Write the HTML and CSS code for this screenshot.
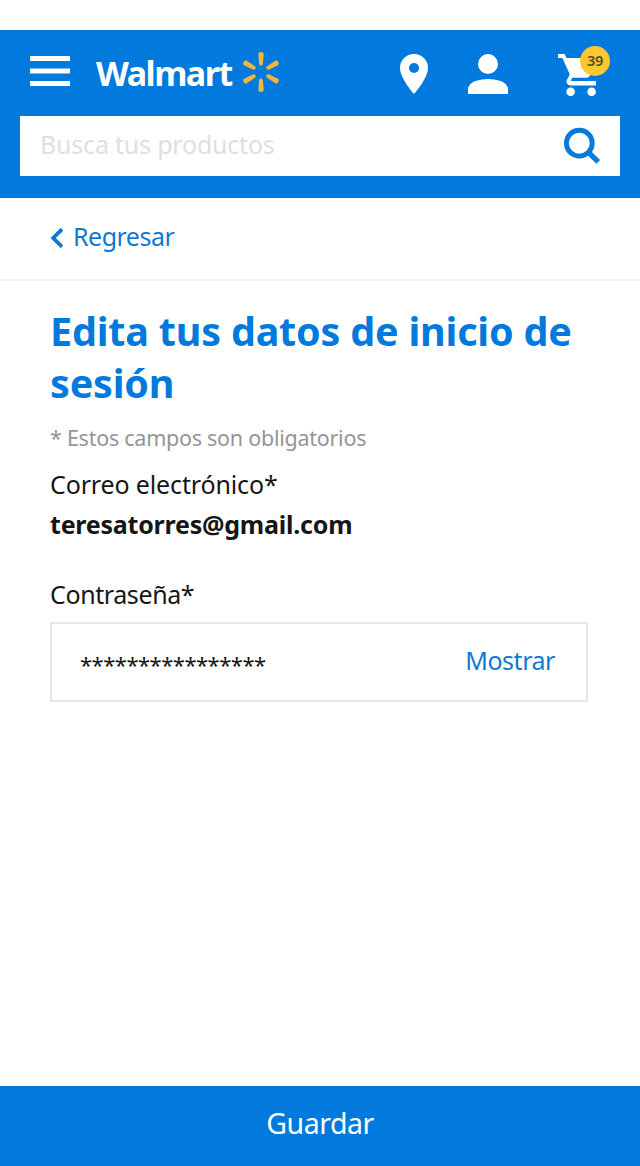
FILE: index.html
```html
<!DOCTYPE html>
<html lang="es">
<head>
<meta charset="utf-8">
<title>Edita tus datos de inicio de sesión</title>
<link rel="stylesheet" href="styles.css">
</head>
<body>
<div class="page">
  <header class="header">
    <div class="topbar">
      <button class="icon-btn menu" aria-label="Menú">
        <svg width="40" height="30" viewBox="0 0 40 30" fill="#fff"><path d="M0 0h40v5H0zM0 12.5h40v5H0zM0 25h40v5H0z"/></svg>
      </button>
      <div class="brand">
        <span class="brand-name">Walmart</span>
        <svg class="spark" width="40" height="40" viewBox="-18 -20 40 40" fill="#efb73e">
          <path id="ray" d="M-2.700-18Q-2.700-20 0-20T2.700-18L1.900-8Q1.700-6.400 0-6.400T-1.900-8z"/>
          <use href="#ray" transform="rotate(60)"/>
          <use href="#ray" transform="rotate(120)"/>
          <use href="#ray" transform="rotate(180)"/>
          <use href="#ray" transform="rotate(240)"/>
          <use href="#ray" transform="rotate(300)"/>
          <path d="M19 12.6h2v1h-2z" fill="#4b94cf"/>
        </svg>
      </div>
      <nav class="actions">
        <svg width="28" height="40" viewBox="0 0 28 40" fill="#fff"><path fill-rule="evenodd" d="M14 0A14 14 0 0 0 0 14C0 24.5 14 40 14 40S28 24.5 28 14A14 14 0 0 0 14 0zm0 9a5 5 0 1 1 0 10 5 5 0 0 1 0-10z"/></svg>
        <svg width="40" height="40" viewBox="0 0 40 40" fill="#fff"><circle cx="20" cy="10" r="10"/><path d="M0 40v-5c0-6.500 10-10 20-10s20 3.500 20 10v5z"/></svg>
        <div class="cart">
          <svg width="40" height="42" viewBox="0 0 40 42" fill="#fff"><path d="M0 0h6.600l2 4H38q2 .4 1.600 2.500L32 21.500q-1.200 2.200-3.500 2.200H14.400l-1.500 2.500q-.2.800.6.800H38v4.500H13c-3.700 0-5.400-3.200-3.900-6l2.700-4.900L4.400 4H0z"/><circle cx="12.600" cy="37.800" r="4.300"/><circle cx="33.600" cy="37.800" r="4.300"/></svg>
          <span class="badge">39</span>
        </div>
      </nav>
    </div>
    <div class="search">
      <span class="search-text">Busca tus productos</span>
      <svg width="38" height="38" viewBox="0 0 38 38" fill="none" stroke="#0a7ad8"><circle cx="16.300" cy="16.200" r="12.900" stroke-width="4.900"/><path d="M25.500 25.500l9.800 9.300" stroke-width="5.200"/></svg>
    </div>
  </header>
  <div class="back">
    <svg width="13" height="20" viewBox="0 0 13 20" fill="none" stroke="#0f79d2" stroke-width="3.800"><path d="M12 1.200L3.200 10l8.800 8.800"/></svg>
    <span class="back-text">Regresar</span>
  </div>
  <main class="content">
    <h1 class="title">Edita tus datos de inicio de sesión</h1>
    <p class="note">* Estos campos son obligatorios</p>
    <p class="label label-email">Correo electrónico*</p>
    <p class="email">teresatorres@gmail.com</p>
    <p class="label label-password">Contraseña*</p>
    <div class="field">
      <span class="password">****************</span>
      <span class="show">Mostrar</span>
    </div>
  </main>
  <footer class="save"><span class="save-text">Guardar</span></footer>
</div>
</body>
</html>
```
FILE: styles.css
```css
* { box-sizing: border-box; }
body { margin: 0; background: #fff; font-family: "Noto Sans", "Open Sans", sans-serif; color: #161616; }
h1, p { margin: 0; }
svg { display: block; flex: none; }
.page { width: 640px; height: 1166px; padding-top: 30px; display: flex; flex-direction: column; }
.header { height: 168px; background: #0279dc; padding: 0 20px 22px; display: flex; flex-direction: column; flex: none; }
.topbar { height: 86px; padding: 0 10px; display: flex; align-items: flex-start; }
.icon-btn { border: 0; padding: 0; background: none; }
.menu { margin-top: 26px; }
.brand { display: flex; margin-left: 26px; padding-top: 22px; }
.brand-name { width: 147px; font-size: 34px; line-height: 42px; font-weight: 700; color: #fff; letter-spacing: -1.500px; }
.actions { display: flex; margin-left: auto; padding: 24px 12px 0 0; }
.actions > svg + svg { margin-left: 40px; }
.cart { position: relative; margin-left: 50px; }
.badge { position: absolute; left: 22px; top: -8px; width: 30px; height: 30px; border-radius: 50%; background: #fdc82f; color: #554c2c; font-size: 14.500px; font-weight: 600; line-height: 29px; text-align: center; letter-spacing: -.2px; }
.search { height: 60px; background: #fff; padding: 0 19px 0 20px; display: flex; align-items: center; justify-content: space-between; }
.search-text { font-size: 25px; line-height: 34px; color: #dfdfdf; letter-spacing: -.2px; margin-top: -5px; }
.back { height: 83px; flex: none; border-bottom: 2px solid #f2f2f2; padding: 0 50px; display: flex; align-items: center; gap: 10px; }
.back svg { margin-top: -2px; }
.back-text { font-size: 25px; line-height: 34px; color: #0f79d2; letter-spacing: -.5px; margin-top: -5px; }
.content { flex: 1; padding: 24px 50px 0; }
.title { font-size: 39.500px; line-height: 52px; font-weight: 700; color: #0279dc; letter-spacing: -.2px; }
.note { margin-top: 13px; font-size: 21.500px; line-height: 32px; color: #959595; letter-spacing: -.26px; }
.label { font-size: 25px; line-height: 34px; }
.label-email { margin-top: 13px; letter-spacing: -.14px; }
.email { margin-top: 6px; font-size: 25px; line-height: 34px; font-weight: 700; letter-spacing: -.22px; }
.label-password { margin-top: 36px; letter-spacing: -.4px; }
.field { width: 538px; height: 80px; margin-top: 11px; border: 2px solid #e6e6e6; padding: 0 31px 0 28px; display: flex; align-items: center; justify-content: space-between; }
.password { font-size: 22px; line-height: 24px; letter-spacing: -.520px; margin-top: 4px; }
.show { font-size: 25px; line-height: 34px; color: #0f79d2; letter-spacing: -.45px; margin-top: -5px; }
.save { height: 80px; flex: none; background: #0279dc; color: #fff; display: flex; align-items: center; justify-content: center; }
.save-text { font-size: 28.500px; line-height: 38px; letter-spacing: -.5px; margin-top: -6px; }
```
